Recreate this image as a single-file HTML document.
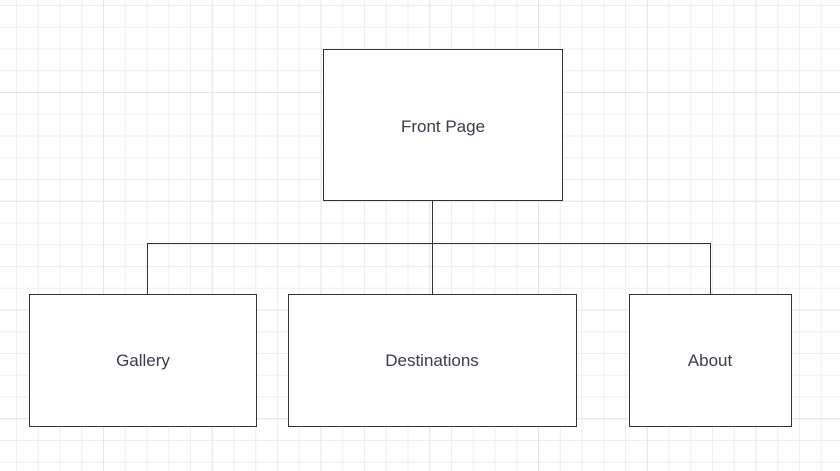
<!DOCTYPE html>
<html><head><style>
html,body{margin:0;padding:0;width:840px;height:471px;overflow:hidden;background:#fff}
svg{display:block}
text{font-family:"Liberation Sans",sans-serif;font-size:17px;fill:#3b3d4a}
</style></head><body>
<svg width="840" height="471" xmlns="http://www.w3.org/2000/svg">
<defs>
<pattern id="g" x="16" y="5" width="21.75" height="21.75" patternUnits="userSpaceOnUse">
<path d="M0.5 0V21.75M0 0.5H21.75" stroke="#efefef" stroke-width="1" fill="none"/>
</pattern>
<pattern id="G" x="103" y="92" width="108.75" height="108.75" patternUnits="userSpaceOnUse">
<path d="M0.5 0V108.75M0 0.5H108.75" stroke="#e6e6e6" stroke-width="1" fill="none"/>
</pattern>
</defs>
<rect width="840" height="471" fill="url(#g)"/>
<rect width="840" height="471" fill="url(#G)"/>
<g stroke="#333" stroke-width="1" fill="none">
<path d="M432.5 200V243.5M147.5 294V243.5H710.5V294M432.5 243.5V294"/>
</g>
<g stroke="#333" stroke-width="1" fill="#fff">
<rect x="323.5" y="49.5" width="239" height="151"/>
<rect x="29.5" y="294.5" width="227" height="132"/>
<rect x="288.5" y="294.5" width="288" height="132"/>
<rect x="629.5" y="294.5" width="162" height="132"/>
</g>
<g text-anchor="middle">
<text x="443" y="132">Front Page</text>
<text x="143" y="366">Gallery</text>
<text x="432" y="366">Destinations</text>
<text x="710" y="366">About</text>
</g>
</svg>
</body></html>
